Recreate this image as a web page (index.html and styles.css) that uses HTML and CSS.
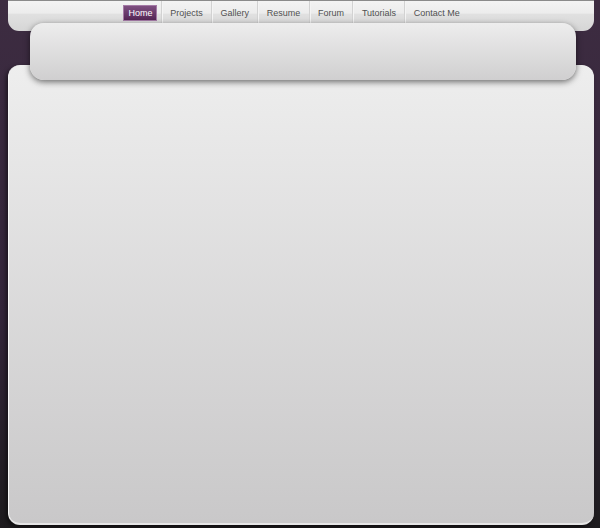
FILE: index.html
```html
<!DOCTYPE html>
<html lang="en">
<head>
    <title>home</title>
    <link rel="stylesheet" href="styles.css">
</head>
<body>
    <div class="page">
        <div class="topbar">
            <ul class="nav">
                <li><a class="current" href="#">Home</a></li>
                <li><a href="#">Projects</a></li>
                <li><a href="#">Gallery</a></li>
                <li><a href="#">Resume</a></li>
                <li><a href="#">Forum</a></li>
                <li><a href="#">Tutorials</a></li>
                <li><a href="#">Contact Me</a></li>
            </ul>
        </div>
        <div class="header"></div>
        <div class="main"></div>
    </div>
</body>
</html>
```

FILE: styles.css
```css
*{
    margin: 0;
    padding: 0;
    box-sizing: border-box;
}
html, body{
    height: 100%;
}
body{
    background: linear-gradient(#3d2c41 0, #33253a 60%, #1d1b1e 100%);
    font-family: 'Liberation Sans', Arial, sans-serif;
    padding: 0 6px 4px 8px;
}

.page{
    width: 586px;
    display: flex;
    flex-direction: column;
}

.topbar{
    height: 31px;
    border-top: 1px solid #8a8a8a;
    border-radius: 0 0 11px 11px;
    background: linear-gradient(#f3f3f3 0, #ececec 40%, #e0e0e0 45%, #d6d6d6 100%);
    padding-left: 112px;
}
.nav{
    list-style: none;
    display: flex;
    align-items: center;
}
.nav li{
    padding: 0 3.4px;
    height: 23px;
    display: flex;
    align-items: center;
}
.nav li + li{
    border-left: 1px solid #d2d2d2;
    box-shadow: inset 1px 0 0 #f4f4f4;
}
.nav a{
    display: block;
    font-size: 9px;
    line-height: 14px;
    padding: 1px 5px;
    color: #505050;
    text-decoration: none;
}
.nav a.current{
    color: #fff;
    background: linear-gradient(#7e4f80 0, #6a3b6c 50%, #552656 100%);
    border: 1px solid #a47aa6;
    padding: 0 4px;
}

.header{
    position: relative;
    z-index: 1;
    height: 57px;
    margin: -8px 18px 0 22px;
    border-radius: 14px;
    background: linear-gradient(#ededed, #d0cfd0);
    box-shadow: 0 2px 6px rgba(0, 0, 0, 0.55);
}

.main{
    height: 460px;
    margin-top: -15px;
    border-radius: 12px;
    background: linear-gradient(#eeeeee, #c9c8c9);
    border-left: 1px solid #f6f6f6;
    border-bottom: 2px solid #e6e6e6;
    box-shadow: -2px 2px 4px rgba(0, 0, 0, 0.5);
}
```
